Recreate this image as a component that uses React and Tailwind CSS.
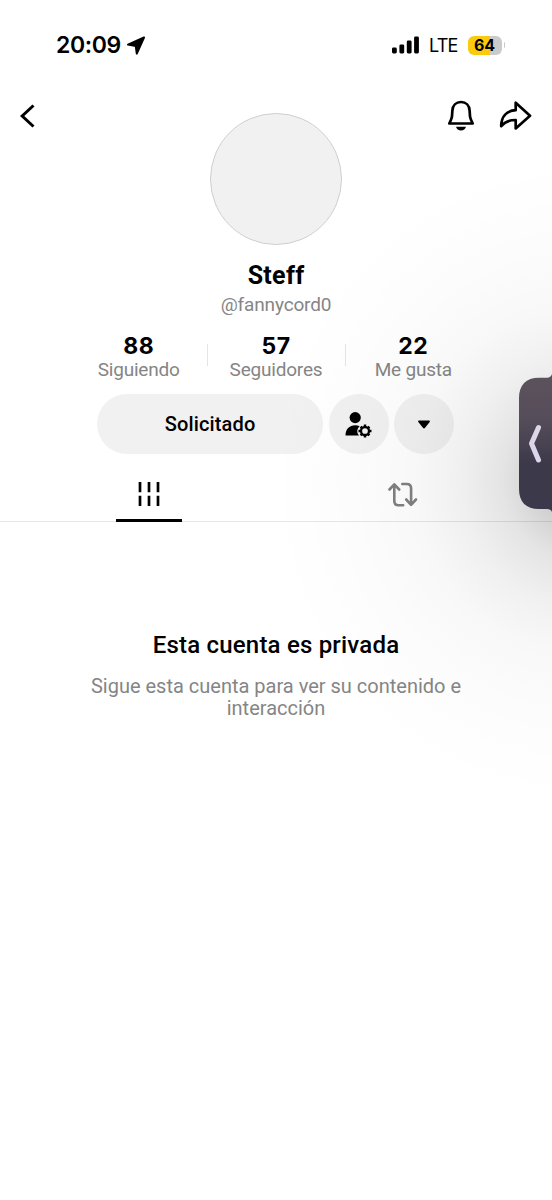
const STATS = [
  { value: '88', label: 'Siguiendo' },
  { value: '57', label: 'Seguidores' },
  { value: '22', label: 'Me gusta' },
]

function StatusBar() {
  return (
    <div className="flex h-[90px] items-center justify-between pr-[47px] pl-[56px] font-['Inter',sans-serif]">
      <div className="flex items-center gap-[5px]">
        <span className="text-[23px] font-semibold tracking-[-0.4px]">20:09</span>
        <svg width="20" height="19" viewBox="0 0 20 19">
          <path d="M18 1.500 2 8.600 9.700 9.900 10.800 17.500Z" stroke="#000" strokeWidth="2" strokeLinejoin="round" />
        </svg>
      </div>
      <div className="flex items-center">
        <svg width="27" height="18" viewBox="0 0 27 18">
          <rect x="0" y="11.500" width="4.800" height="6" rx="1.400" />
          <rect x="7.400" y="8.500" width="4.800" height="9" rx="1.400" />
          <rect x="14.800" y="4.500" width="4.800" height="13" rx="1.400" />
          <rect x="22.100" y="0.500" width="4.800" height="17" rx="1.400" />
        </svg>
        <span className="ml-[10px] text-[18px] tracking-[-0.8px]">LTE</span>
        <span className="ml-[10px] flex h-[19px] w-[34px] items-center justify-center rounded-[6px] bg-linear-to-r from-[#facb0c] from-64% to-[#cbcbcb] to-64% text-[16px] font-bold tracking-[-0.2px]">
          64
        </span>
        <span className="ml-[2px] h-[6px] w-[1.5px] rounded-r-full bg-[#c8c8c8]" />
      </div>
    </div>
  )
}

function Header() {
  return (
    <header className="flex h-[156px] items-start justify-between pr-[20px] pl-[20px]">
      <div className="flex h-[51px] w-[86px] items-center">
        <svg width="16" height="26" viewBox="0 0 16 26" fill="none" stroke="#000" strokeWidth="3">
          <path d="M13.500 2.500 2.200 13 13.500 23.500" />
        </svg>
      </div>
      <div className="mt-[22.500px] size-[132px] rounded-full border border-[#cfcfcf] bg-[#f1f1f1]" />
      <div className="flex h-[51px] w-[86px] items-center justify-between pl-px">
        <svg width="28" height="32" viewBox="0 0 28 32">
          <path
            d="M14 2c-5 0-8.300 3.600-8.600 8.400l-.4 5.800c-.1 1.500-.5 2.600-1.100 3.800L2.300 23.500h23.400l-1.600-3.500c-.6-1.200-1-2.300-1.100-3.800l-.4-5.800c-.3-4.800-3.600-8.400-8.600-8.400Z"
            fill="none"
            stroke="#000"
            strokeWidth="2.700"
            strokeLinejoin="round"
          />
          <path d="M9 26.800h10c-.6 2.400-2.500 3.700-5 3.700s-4.400-1.300-5-3.700Z" />
        </svg>
        <svg width="33" height="32" viewBox="0 0 33 32" fill="none" stroke="#000" strokeWidth="2.700" strokeLinejoin="round">
          <path d="M16.700 2.700v7.500C8 10.700 2.200 16.200 2.200 26.200c3.500-4.500 8-6.300 14.500-6.200v8.500L31 15.700 16.700 2.700Z" />
        </svg>
      </div>
    </header>
  )
}

function Stats() {
  return (
    <div className="mx-auto mt-[16px] flex w-[412px]">
      {STATS.map((stat, i) => (
        <div key={stat.label} className="flex flex-1 items-center">
          {i > 0 && <span className="-mt-[4px] -mr-px h-[22px] w-px bg-[#e5e5e5]" />}
          <div className="flex-1 text-center">
            <p className="font-['Inter',sans-serif] text-[23px] leading-[26px] font-bold tracking-[0.500px]">{stat.value}</p>
            <p className="text-[19px] leading-[22px] tracking-[-0.200px] text-[#858585]">{stat.label}</p>
          </div>
        </div>
      ))}
    </div>
  )
}

function Actions() {
  return (
    <div className="mt-[13px] flex justify-center gap-[5.500px] pr-px">
      <button className="h-[60px] w-[226px] rounded-full bg-[#f1f1f1] text-[20px] font-medium tracking-[0.150px]">
        Solicitado
      </button>
      <button className="flex size-[60px] items-center justify-center rounded-full bg-[#f1f1f1] pr-[2px]">
        <svg width="28" height="28" viewBox="0 0 28 28">
          <circle cx="11.200" cy="7.600" r="5.600" />
          <path d="M1.500 25.500c0-6 3.800-10.200 9.700-10.200 1.700 0 3.200.3 4.500 1-2.800 2.200-3.300 6.400-.7 9.200Z" />
          <g transform="translate(21 21)" fill="none" stroke="#000">
            <circle r="4" strokeWidth="2.300" />
            <path
              d="M0-4.500v-2M0 4.500v2M-4.500 0h-2M4.500 0h2M-3.200-3.200l-1.200-1.200M3.200-3.200l1.200-1.200M-3.200 3.200l-1.200 1.200M3.200 3.200l1.200 1.200"
              strokeWidth="2.400"
            />
          </g>
        </svg>
      </button>
      <button className="flex size-[60px] items-center justify-center rounded-full bg-[#f1f1f1]">
        <svg width="12" height="9" viewBox="0 0 12 9">
          <path d="M1 .5h10c.8 0 1.200.8.700 1.400L6.900 8c-.5.600-1.300.600-1.800 0L.3 1.900C-.2 1.300.2.5 1 .5Z" />
        </svg>
      </button>
    </div>
  )
}

function Tabs() {
  return (
    <nav className="mt-[14px] flex h-[54px] border-b border-[#e6e6e6] px-[22px]">
      <button className="flex flex-1 flex-col items-center justify-between">
        <svg className="mt-[14px]" width="22" height="24" viewBox="0 0 22 24" stroke="#000" strokeWidth="2.700">
          <path d="M2 0v10.200M11 0v10.200M20 0v10.200M2 13.800V24M11 13.800V24M20 13.800V24" />
        </svg>
        <span className="-mb-px h-[3px] w-[66px] bg-black" />
      </button>
      <button className="flex flex-1 items-start justify-center pt-[14px]">
        <svg width="30" height="26" viewBox="0 0 30 26" fill="none" stroke="#808080" strokeWidth="2.600" strokeLinecap="round" strokeLinejoin="round">
          <path d="M1.500 7.500 6.300 2.300 11.200 7.500M6.300 3v16c0 2.600 1.500 4.300 4.200 4.300h4.700" />
          <path d="M14.300 2h4.500c2.800 0 4.300 1.700 4.300 4.300v16.200M18.200 17.500l4.900 5.300 4.900-5.300" />
        </svg>
      </button>
    </nav>
  )
}

function PrivateNotice() {
  return (
    <section className="mt-[108px] text-center">
      <h2 className="text-[24px] leading-[30px] font-medium tracking-[0.200px]">Esta cuenta es privada</h2>
      <p className="mx-auto mt-[15px] w-[400px] text-[20px] leading-[22px] text-[#858585]">
        Sigue esta cuenta para ver su contenido e interacción
      </p>
    </section>
  )
}

// System panel docked to the right edge, casting a soft shadow over the page
function SidePanel() {
  return (
    <>
      <div className="pointer-events-none absolute inset-0 bg-[radial-gradient(ellipse_310px_320px_at_580px_480px,rgba(0,0,0,0.27)_0%,rgba(0,0,0,0.19)_13%,rgba(0,0,0,0.105)_25%,rgba(0,0,0,0.06)_39%,rgba(0,0,0,0.028)_54%,rgba(0,0,0,0.01)_74%,transparent_100%)]" />
      <svg className="absolute top-[374px] right-0" width="34" height="139" viewBox="0 0 34 139">
        <defs>
          <linearGradient id="panel" x1="0" y1="0" x2="0" y2="1">
            <stop offset="0" stopColor="#5b525d" />
            <stop offset="0.3" stopColor="#574e5b" />
            <stop offset="0.65" stopColor="#3d394a" />
            <stop offset="1" stopColor="#3b394b" />
          </linearGradient>
        </defs>
        <path d="M34 0c-1 2.500-2.500 3.700-5 3.700h-8C8 3.700 1 11 1 24v91c0 13 7 20 20 20h8c2.500 0 4 .8 5 3Z" fill="url(#panel)" />
        <path d="M20.500 53.500 13.500 69.500 20.500 86" fill="none" stroke="#dcd6eb" strokeWidth="5" strokeLinecap="round" strokeLinejoin="round" />
      </svg>
    </>
  )
}

export default function App() {
  return (
    <main className="relative h-[1200px] w-[552px] overflow-hidden bg-white font-['Roboto',sans-serif] text-black">
      <StatusBar />
      <Header />
      <div className="mt-[15px] text-center">
        <h1 className="text-[25px] leading-[30px] font-bold tracking-[0.300px]">Steff</h1>
        <p className="mt-[2px] text-[19px] leading-[24px] tracking-[-0.150px] text-[#858585]">@fannycord0</p>
      </div>
      <Stats />
      <Actions />
      <Tabs />
      <PrivateNotice />
      <SidePanel />
    </main>
  )
}
